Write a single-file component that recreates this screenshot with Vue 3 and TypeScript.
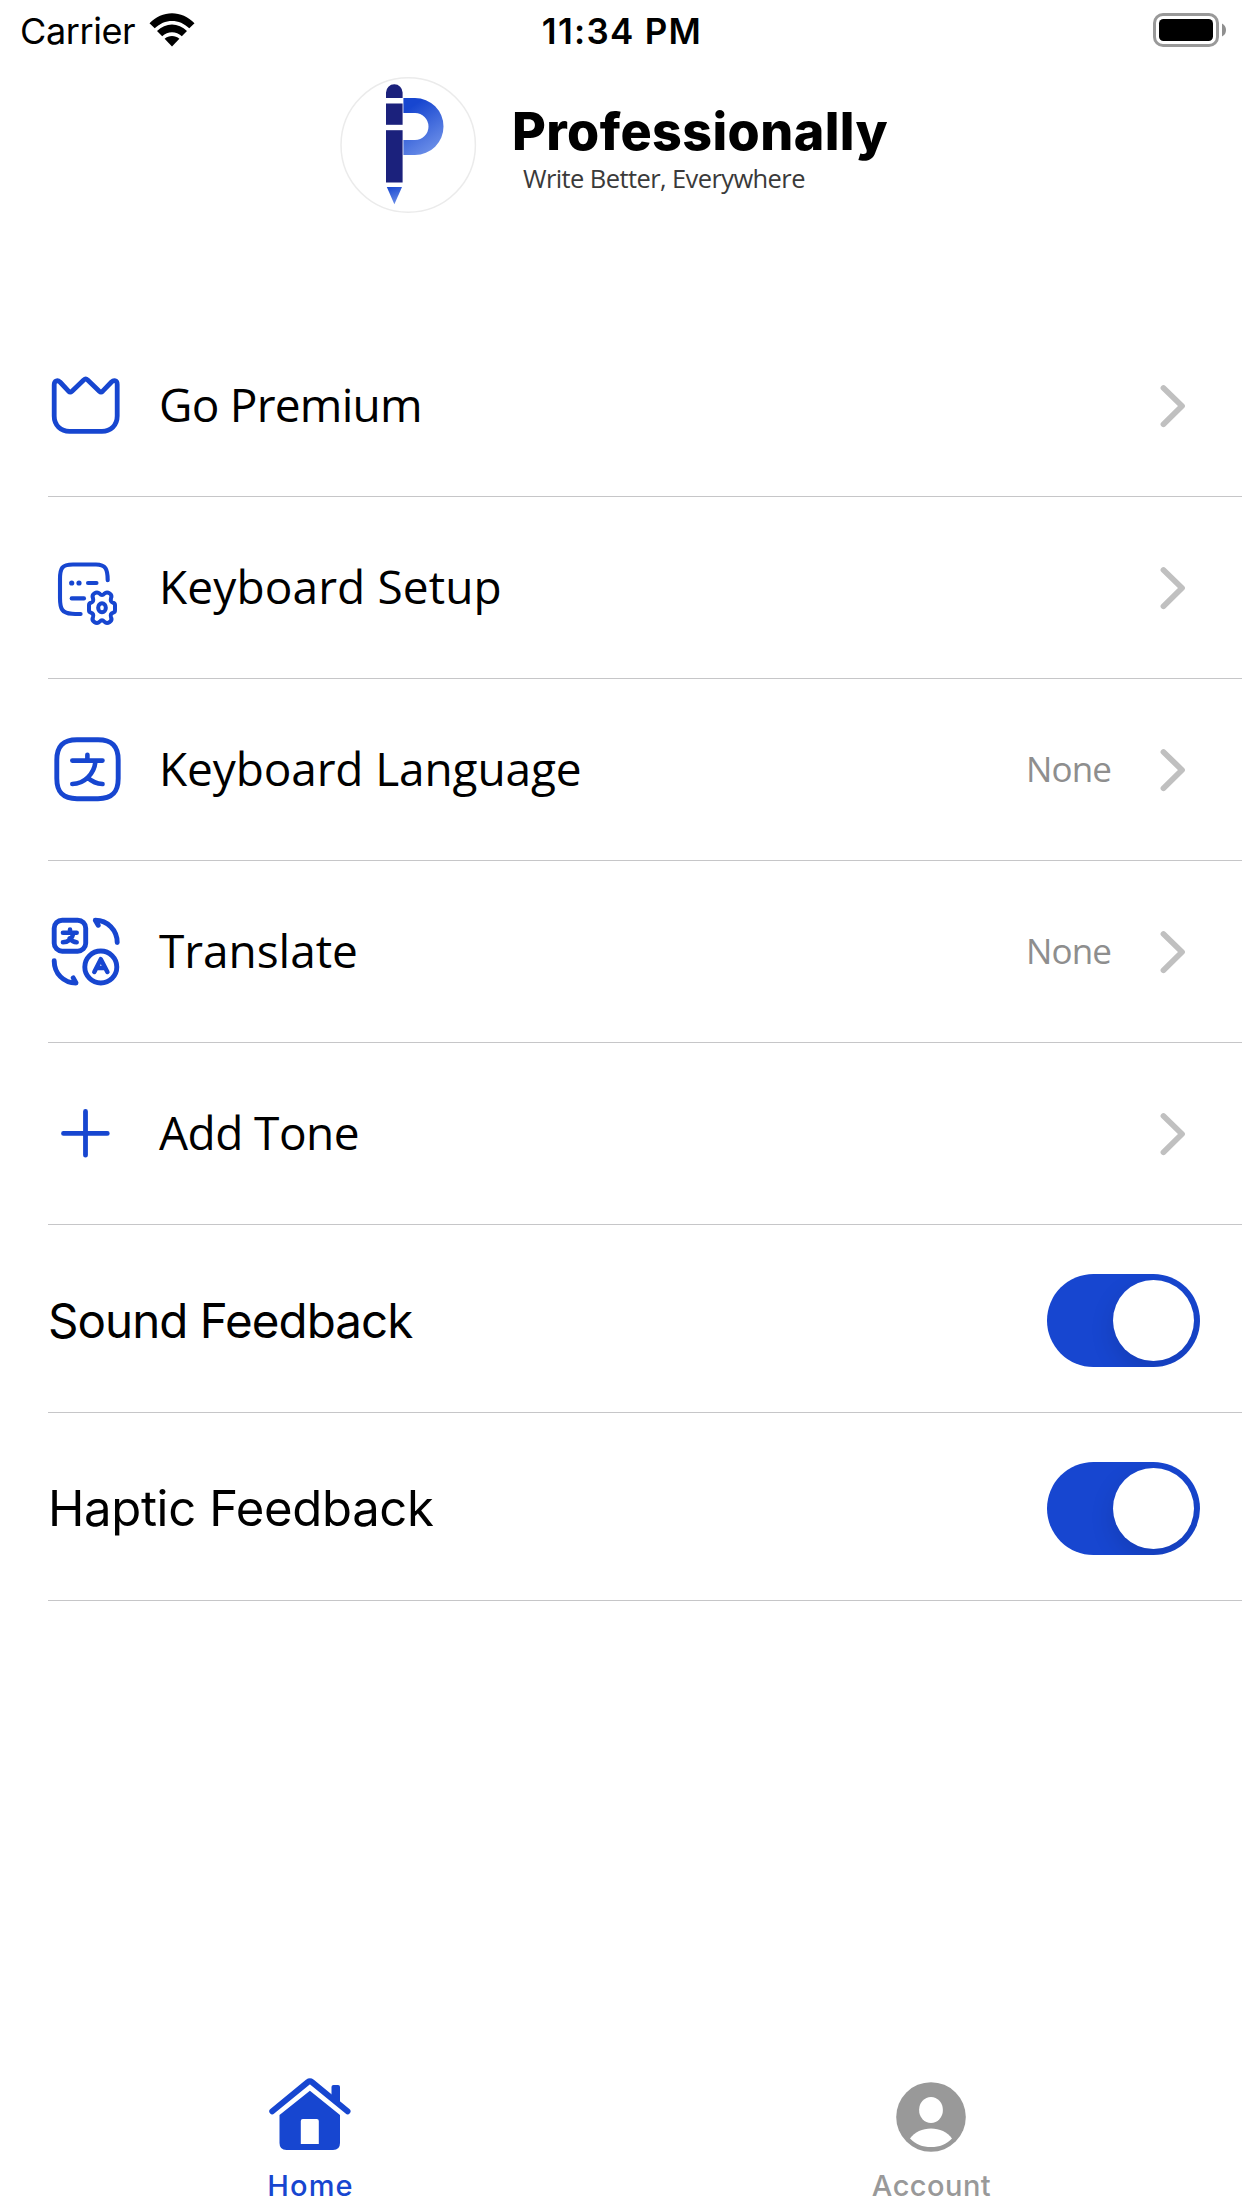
<script setup lang="ts">
import { ref } from 'vue'

type IconName = 'crown' | 'keyboard' | 'language' | 'translate' | 'plus'

interface MenuItem {
  icon: IconName
  label: string
  tracking: number
  value?: string
}

interface SwitchItem {
  label: string
  size: number
  tracking: number
  on: boolean
}

const menu: MenuItem[] = [
  { icon: 'crown', label: 'Go Premium', tracking: -0.75 },
  { icon: 'keyboard', label: 'Keyboard Setup', tracking: 0.12 },
  { icon: 'language', label: 'Keyboard Language', tracking: -0.13, value: 'None' },
  { icon: 'translate', label: 'Translate', tracking: -0.05, value: 'None' },
  { icon: 'plus', label: 'Add Tone', tracking: -0.55 },
]

const switches = ref<SwitchItem[]>([
  { label: 'Sound Feedback', size: 47.5, tracking: -0.95, on: true },
  { label: 'Haptic Feedback', size: 49, tracking: -0.34, on: true },
])
</script>

<template>
  <div class="screen">
    <header class="status">
      <div class="carrier">
        <span>Carrier</span>
        <svg class="wifi" width="46" height="34" viewBox="0 0 46 34">
          <path d="M0.5 10.2 C13 -3.2 33 -3.2 45.5 10.2 L40.3 15.3 C30.5 5.4 15.5 5.4 5.7 15.3Z" />
          <path d="M8 18 C16.5 9.3 29.5 9.3 38 18 L32.8 23.2 C27.2 17.9 18.8 17.9 13.2 23.2Z" />
          <path d="M15.6 25.7 C19.8 22 26.2 22 30.4 25.7 L23 33.4Z" />
        </svg>
      </div>
      <div class="time">11:34 PM</div>
      <div class="power">
        <svg width="74" height="34" viewBox="0 0 74 34">
          <rect x="1.5" y="1.5" width="63" height="31" rx="8.5" fill="none" stroke="#999" stroke-width="3" />
          <rect x="6" y="6" width="54" height="22" rx="4.5" fill="#000" />
          <path d="M69 10.5 Q73 12.5 73 17 Q73 21.5 69 23.5Z" fill="#8f8f8f" />
        </svg>
      </div>
    </header>

    <div class="brand">
      <svg class="logo" width="137" height="137" viewBox="0 0 137 137">
        <defs>
          <linearGradient id="bowl" x1="0.2" y1="0.15" x2="0.6" y2="1">
            <stop offset="0" stop-color="#1746d0" />
            <stop offset="1" stop-color="#6c8fe8" />
          </linearGradient>
          <linearGradient id="nib" x1="0" y1="0" x2="0.3" y2="1">
            <stop offset="0" stop-color="#1746d0" />
            <stop offset="1" stop-color="#6488e6" />
          </linearGradient>
        </defs>
        <circle cx="68.2" cy="68" r="67.2" fill="#fff" stroke="#ebebeb" stroke-width="1.5" />
        <path d="M46 21 V15.5 A8.3 8.3 0 0 1 62.6 15.5 V21Z" fill="#1b217c" />
        <rect x="46" y="26.5" width="16.6" height="21.3" fill="#1b217c" />
        <rect x="46" y="53.2" width="16.6" height="52.3" fill="#1b217c" />
        <path d="M46.8 110 H62 L54.4 127.3Z" fill="url(#nib)" />
        <path d="M63.4 21 H75 A28.5 28.5 0 0 1 75 78 H63.4 V63 H75 A13.5 13.5 0 0 0 75 36 H63.4Z" fill="url(#bowl)" />
      </svg>
      <div class="brand-text">
        <div class="name">Professionally</div>
        <div class="tagline">Write Better, Everywhere</div>
      </div>
    </div>

    <main class="list">
      <div v-for="item in menu" :key="item.label" class="row">
        <svg class="icon" width="72" height="71" viewBox="0 0 72 71">
          <g v-if="item.icon === 'crown'" stroke-width="4.8">
            <path d="M4.2 15 C4.2 10.2 7.8 10 10 12 L18.5 21.2 Q20.2 22.8 22 21.2 L33.7 10 Q35.7 8.2 37.7 10 L49.3 21.2 Q51 22.8 52.7 21.2 L61.5 12 C63.8 9.8 67.2 10.2 67.2 14.5 V46 C67.2 55.5 60.5 61.3 52 61.3 H19.5 C11 61.3 4.2 55.5 4.2 46Z" />
          </g>
          <g v-else-if="item.icon === 'keyboard'" stroke-width="4.1">
            <path d="M57.7 28.3 C57.7 17 55.5 12.5 46 12.5 H23 C12 12.5 10 16 10 27 V46 C10 57 12 61 22 61.8 Q24 62 30.6 62" />
            <path d="M38 31 H46.5" />
            <path d="M21.7 46.4 H34" />
            <circle class="solid" cx="21.7" cy="31" r="2.6" />
            <circle class="solid" cx="29" cy="31" r="2.6" />
            <g transform="translate(52 55.7) scale(0.3333)" stroke-width="12">
              <path d="M7 -42 Q14 -49 23 -43 Q31 -38 27 -28 Q24 -17 33 -15 Q39 -14 39 -8 V8 Q39 14 33 15 Q24 17 27 28 Q31 38 23 43 Q14 49 7 42 Q0 34 -7 42 Q-14 49 -23 43 Q-31 38 -27 28 Q-24 17 -33 15 Q-39 14 -39 8 V-8 Q-39 -14 -33 -15 Q-24 -17 -27 -28 Q-31 -38 -23 -43 Q-14 -49 -7 -42 Q0 -34 7 -42Z" />
              <ellipse rx="11.5" ry="13.5" />
            </g>
          </g>
          <g v-else-if="item.icon === 'language'" stroke-width="4.9">
            <path d="M27 5.8 H48 C62 5.8 68.2 12 68.2 26 V44.5 C68.2 58.5 62 64.7 48 64.7 H27 C13 64.7 6.8 58.5 6.8 44.5 V26 C6.8 12 13 5.8 27 5.8Z" />
            <path d="M22.3 26.6 H52.5 M37.4 20.8 V26 M45.5 27 C44.5 40 34 50 22.3 50 M38 44 Q44 49.5 52.5 50" stroke-width="4.6" />
          </g>
          <g v-else-if="item.icon === 'translate'" stroke-width="4.9">
            <rect x="4.2" y="4.2" width="31.5" height="31" rx="8" />
            <path d="M12.9 16.7 H26.7 M20 13.6 V16.5 M23.4 17.3 C22.3 22.5 18.5 26.2 12.9 26.3 M19.5 22.5 Q22.5 26 26.7 26.3" stroke-width="4.5" />
            <circle cx="50.8" cy="51" r="16" />
            <path d="M44.3 56 L50.8 43.2 L57.4 56 M46.5 52 H55.2" stroke-width="4.5" />
            <path d="M67.2 26.5 C67.2 14 57.5 4.2 45.3 4.2 L48.2 9.3" />
            <path d="M4.2 44.7 C4.2 57.5 13.5 67 26 67 L23.2 61.8" />
          </g>
          <g v-else stroke-width="4.8">
            <path d="M35.5 13.5 V57.2 M13.5 35.4 H57.3" />
          </g>
        </svg>
        <span class="label" :style="{ letterSpacing: item.tracking + 'px' }">{{ item.label }}</span>
        <span v-if="item.value" class="value">{{ item.value }}</span>
        <svg class="chevron" width="26" height="44" viewBox="0 0 26 44">
          <path d="M3.5 4 L22 22 L3.5 40.2" />
        </svg>
      </div>

      <div v-for="s in switches" :key="s.label" class="row switch-row">
        <span class="switch-label" :style="{ fontSize: s.size + 'px', letterSpacing: s.tracking + 'px' }">{{ s.label }}</span>
        <button class="toggle" :class="{ on: s.on }" type="button" role="switch" :aria-checked="s.on" :aria-label="s.label" @click="s.on = !s.on">
          <span class="knob"></span>
        </button>
      </div>
    </main>

    <nav class="tabs">
      <div class="tab active">
        <svg width="85" height="76" viewBox="0 0 85 76">
          <path d="M63.5 22 V10 Q63.5 8 65.5 8 H70 Q72 8 72 10 V29Z" fill="currentColor" />
          <path d="M4.3 34.3 L39.8 5.2 Q41.9 3.6 44 5.2 L79.5 34.3" fill="none" stroke="currentColor" stroke-width="6" stroke-linecap="round" />
          <path fill-rule="evenodd" d="M41.9 13.7 L72 38 V66 Q72 73 65 73 H18.5 Q11.5 73 11.5 66 V38Z M34.8 42 Q32.8 42 32.8 44 V67 H50.8 V44 Q50.8 42 48.8 42Z" fill="currentColor" />
        </svg>
        <span class="tab-label home">Home</span>
      </div>
      <div class="tab">
        <svg width="72" height="76" viewBox="0 0 72 76">
          <circle cx="35" cy="40" r="34.8" fill="currentColor" />
          <ellipse cx="35" cy="33" rx="11.9" ry="13" fill="#fff" />
          <path d="M14 61.5 C18.5 55 26.5 51.5 35 51.5 C43.5 51.5 51.5 55 56 61.5 C50.5 67.5 43.5 70 35 70 C26.5 70 19.5 67.5 14 61.5Z" fill="#fff" />
        </svg>
        <span class="tab-label">Account</span>
      </div>
    </nav>
  </div>
</template>

<style>
body {
  background: #fff;
}
</style>

<style scoped>
.screen {
  display: flex;
  flex-direction: column;
  width: 1242px;
  height: 2208px;
  overflow: hidden;
  background: #fff;
  color: #000;
  font-family: Inter, sans-serif;
}

.status {
  display: grid;
  grid-template-columns: 1fr auto 1fr;
  align-items: center;
  height: 60px;
  padding: 0 15px 0 20px;
  box-sizing: border-box;
}

.carrier {
  display: flex;
  align-items: center;
  gap: 14px;
  font-size: 36px;
  letter-spacing: -0.4px;
}

.carrier span {
  padding-top: 2px;
}

.wifi {
  margin-bottom: 1px;
}

.time {
  padding: 2px 3px 0 0;
  font-size: 35px;
  font-weight: 600;
  letter-spacing: 1.3px;
}

.power {
  display: flex;
  justify-content: flex-end;
}

.brand {
  display: flex;
  align-items: flex-start;
  height: 255px;
  padding: 17px 0 0 340px;
  box-sizing: border-box;
}

.brand-text {
  padding: 24px 0 0 34px;
  white-space: nowrap;
}

.name {
  padding-left: 1px;
  font-size: 52px;
  font-weight: 780;
  line-height: 62px;
  letter-spacing: 0.4px;
}

.tagline {
  margin-top: -1px;
  padding-left: 12px;
  color: #3a3a3a;
  font: 25.5px/32px "Open Sans", sans-serif;
  letter-spacing: -0.6px;
}

.list {
  flex: 1;
  padding-left: 48px;
}

.row {
  display: flex;
  align-items: center;
  height: 182px;
  padding: 0 56px 0 2px;
  box-sizing: border-box;
  border-bottom: 1px solid #c6c6c8;
}

.icon {
  flex: none;
  overflow: visible;
  fill: none;
  stroke: #1746d0;
  stroke-linecap: round;
  stroke-linejoin: round;
}

.icon .solid {
  fill: #1746d0;
  stroke: none;
}

.chevron {
  fill: none;
  stroke: #c0c0c0;
  stroke-width: 5.8;
  stroke-linecap: round;
  stroke-linejoin: round;
}

.label {
  flex: 1;
  margin-left: 37px;
  padding-bottom: 3px;
  font-family: "Open Sans", sans-serif;
  font-size: 46px;
  font-weight: 470;
  white-space: nowrap;
}

.value {
  margin-right: 49px;
  padding-bottom: 2px;
  color: #8e8e8e;
  font-family: "Open Sans", sans-serif;
  font-size: 35px;
  font-weight: 460;
  letter-spacing: -0.9px;
}

.switch-row {
  justify-content: space-between;
  height: 188px;
  padding: 4px 42px 0 0;
}

.switch-label {
  white-space: nowrap;
}

.toggle {
  display: flex;
  width: 153px;
  height: 93px;
  padding: 6px;
  box-sizing: border-box;
  overflow: hidden;
  border: 0;
  border-radius: 47px;
  background: #d8d8dc;
}

.toggle.on {
  justify-content: flex-end;
  background: #1746d0;
}

.knob {
  width: 81px;
  height: 81px;
  border-radius: 50%;
  background: #fff;
  box-shadow: 0 9px 24px rgba(0, 0, 0, 0.13);
}

.tabs {
  display: flex;
  height: 131px;
}

.tab {
  display: flex;
  flex: 1;
  flex-direction: column;
  align-items: center;
  color: #999;
}

.tab.active {
  color: #1746d0;
}

.tab-label {
  margin-top: 14px;
  font-size: 29px;
  font-weight: 500;
  line-height: 38px;
  letter-spacing: 0.46px;
}

.tab-label.home {
  letter-spacing: 1.2px;
}
</style>
